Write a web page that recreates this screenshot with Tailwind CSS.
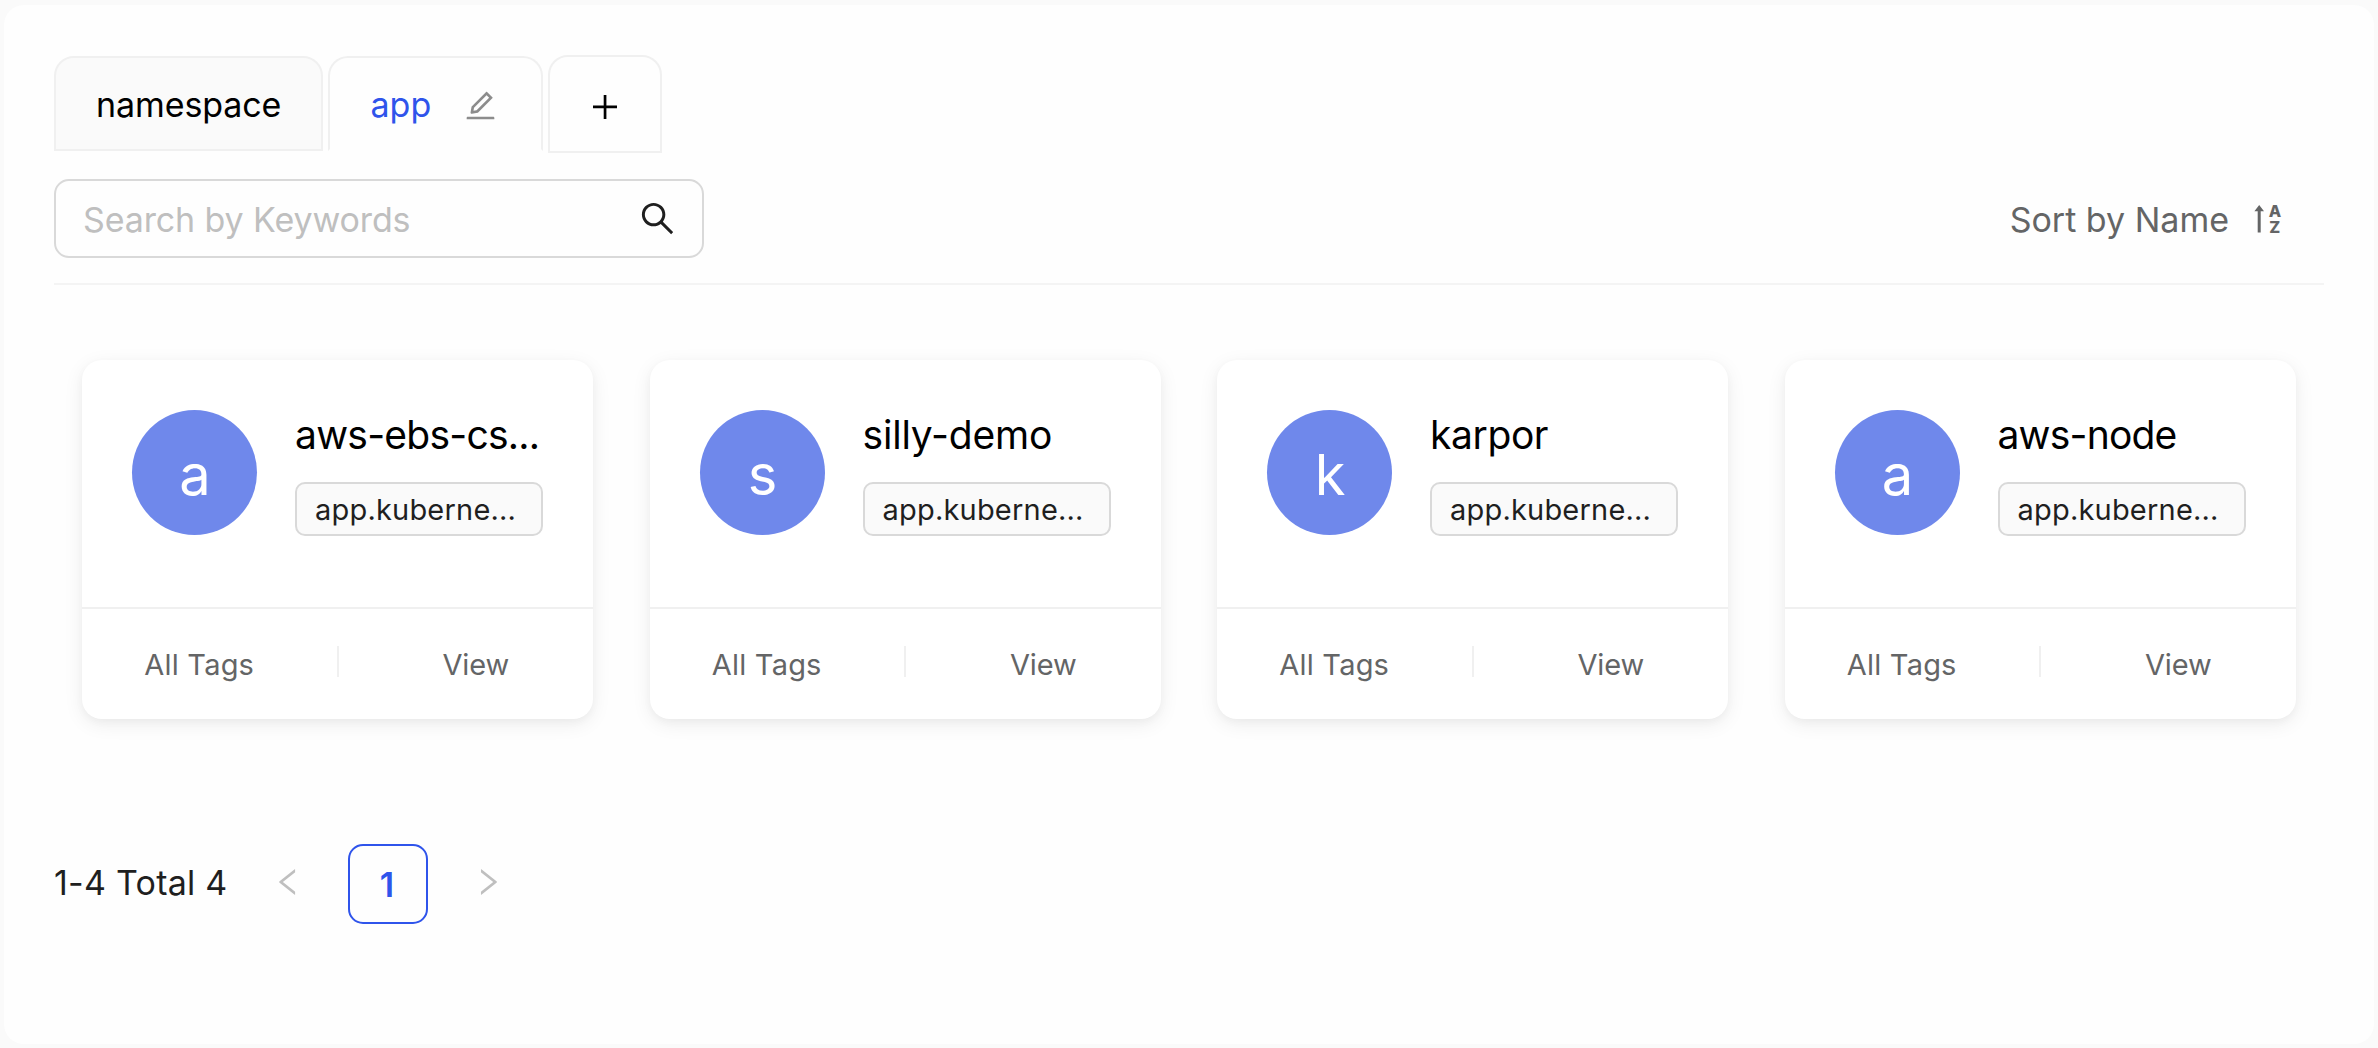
<!DOCTYPE html>
<html lang="en">
<head>
<meta charset="utf-8">
<title>Resource insight</title>
<script src="https://cdn.jsdelivr.net/npm/@tailwindcss/browser@4"></script>
</head>
<body class="h-[1048px] overflow-hidden bg-[#fafafa] px-1 pt-[5px] pb-1 font-[Inter,sans-serif] text-[34px] whitespace-nowrap text-[#1f1f1f]">
<main class="h-full rounded-[20px] bg-[#fefefe] px-[50px] pt-[50px]">

  <!-- Tabs -->
  <nav class="flex h-[98px] items-start gap-[5px] text-black">
    <div class="mt-px flex h-[95px] w-[269px] items-center rounded-t-[20px] border-2 border-[#f0f0f0] bg-[#fafafa] pt-0.5 pl-10 tracking-[-0.1px]">namespace</div>
    <div class="mt-px flex h-[95px] w-[215px] items-center rounded-t-[20px] border-2 border-b-transparent border-[#f0f0f0] pt-0.5 pl-[40.5px] text-[#2f54eb]">
      <span>app</span>
      <svg class="mt-0.5 ml-[34px] size-[31px] text-[#8c8c8c]" viewBox="64 64 896 896" fill="currentColor"><path d="M257.7 752c2 0 4-.2 6-.5L431.9 722c2-.4 3.9-1.3 5.3-2.8l423.9-423.9a9.96 9.96 0 000-14.1L694.9 114.9c-1.9-1.9-4.4-2.9-7.1-2.9s-5.2 1-7.1 2.9L256.8 538.8c-1.5 1.5-2.4 3.3-2.8 5.3l-29.5 168.2a33.5 33.5 0 009.4 29.8c6.6 6.4 14.9 9.9 23.8 9.9zm67.4-174.4L687.8 215l73.3 73.3-362.7 362.6-88.9 15.7 15.6-89zM880 836H144c-17.7 0-32 14.3-32 32v36c0 4.4 3.6 8 8 8h784c4.4 0 8-3.6 8-8v-36c0-17.7-14.3-32-32-32z"/></svg>
    </div>
    <div class="flex h-[98px] w-[114px] items-center justify-center rounded-t-[20px] border-2 border-[#f0f0f0] pt-1.5">
      <svg class="size-[30px]" viewBox="0 0 30 30" fill="currentColor"><path d="M13.7 3h2.7v24h-2.7zM3 13.6h24v2.6H3z"/></svg>
    </div>
  </nav>

  <!-- Search and sort -->
  <div class="mt-[26px] flex h-[106px] items-start justify-between border-b-2 border-[#f4f4f4]">
    <div class="flex h-[79px] w-[650px] items-center justify-between rounded-[15px] border-2 border-[#d9d9d9] pt-0.5 pr-[27px] pl-[27px]">
      <span class="tracking-[-0.12px] text-[#bfbfbf]">Search by Keywords</span>
      <svg class="mb-0.5 size-[35px]" viewBox="64 64 896 896" fill="currentColor"><path d="M909.6 854.5L649.9 594.8C690.2 542.7 712 479 712 412c0-80.2-31.3-155.4-87.9-212.1-56.6-56.7-132-87.9-212.1-87.9s-155.5 31.3-212.1 87.9C143.2 256.5 112 331.8 112 412c0 80.1 31.3 155.5 87.9 212.1C256.5 680.8 331.8 712 412 712c67 0 130.6-21.8 182.7-62l259.7 259.6a8.2 8.2 0 0011.6 0l43.6-43.5a8.2 8.2 0 000-11.6zM570.4 570.4C528 612.7 471.8 636 412 636s-116-23.3-158.4-65.6C211.3 528 188 471.8 188 412s23.3-116.1 65.6-158.4C296 211.3 352.2 188 412 188s116.1 23.2 158.4 65.6S636 352.2 636 412s-23.3 116.1-65.6 158.4z"/></svg>
    </div>
    <div class="flex h-[79px] items-center gap-[23px] pt-0.5 pr-[38px] text-[#646566]">
      <span>Sort by Name</span>
      <svg class="h-[38px] w-[34px]" viewBox="0 -4 34 38" fill="currentColor"><path d="M7.2 0l4.8 6.2H8.7V27.5h-3V6.2H2.4z"/><text x="16.8" y="11.6" font-size="16.2" font-weight="800" font-family="Inter" textLength="12">A</text><text x="17.2" y="28.2" font-size="16.2" font-weight="800" font-family="Inter">Z</text></svg>
    </div>
  </div>

  <!-- Cards -->
  <section id="cards" class="grid grid-cols-4 pt-[75px]"></section>
  <template id="card">
    <div class="pr-[28.5px] pl-7">
      <article class="rounded-[20px] bg-white shadow-[0_5px_20px_0_rgba(0,0,0,0.07),0_3px_8px_0_rgba(0,0,0,0.03)]">
        <div class="flex h-[247px] items-start gap-[38px] px-[50px] pt-[50px]">
          <div data-initial class="flex size-[125px] shrink-0 items-center justify-center rounded-full bg-[#6f88eb] pt-1 pl-px text-[56px] text-white"></div>
          <div class="min-w-0 flex-1">
            <h3 data-name class="text-[39px] leading-[49px] text-black"></h3>
            <div class="mt-[23px] flex h-[54px] items-center rounded-[10px] border-2 border-[#d9d9d9] bg-[#fafafa] pt-0.5 pl-[18px] text-[29px] tracking-[0.2px]">app.kuberne...</div>
          </div>
        </div>
        <div class="flex h-28 items-start border-t-2 border-[#f0f0f0] text-[29px] leading-[112px] text-[#646566]">
          <span class="flex-1 pr-[20px] text-center tracking-[0.2px]">All Tags</span>
          <span class="mt-[37px] h-[31px] w-0.5 bg-[#f0f0f0]"></span>
          <span class="flex-1 pl-[20px] text-center tracking-[-0.1px]">View</span>
        </div>
      </article>
    </div>
  </template>

  <!-- Pagination -->
  <div class="mt-[125px] flex h-20 items-center">
    <span class="w-[194px] pb-[3px] tracking-[0.25px]">1-4 Total 4</span>
    <div class="flex gap-5 text-[#bfbfbf]">
      <div class="flex size-20 items-center justify-center pb-1"><svg class="size-[30px]" viewBox="64 64 896 896" fill="currentColor"><path d="M724 218.3V141c0-6.7-7.7-10.4-12.9-6.3L260.3 486.8a31.86 31.86 0 000 50.3l450.8 352.1c5.3 4.1 12.9.4 12.9-6.3v-77.3c0-4.9-2.3-9.6-6.1-12.6l-360-281 360-281.1c3.8-3 6.1-7.7 6.1-12.6z"/></svg></div>
      <div class="flex size-20 items-center justify-center rounded-[15px] border-2 border-[#2f54eb] pt-px pr-0.5 font-semibold text-[#2f54eb]">1</div>
      <div class="flex size-20 items-center justify-center pb-1"><svg class="size-[30px]" viewBox="64 64 896 896" fill="currentColor"><path d="M765.7 486.8L314.9 134.7A7.97 7.97 0 00302 141v77.3c0 4.9 2.3 9.6 6.1 12.6l360 281.1-360 281.1c-3.9 3-6.1 7.7-6.1 12.6V883c0 6.7 7.7 10.4 12.9 6.3l450.8-352.1a31.96 31.96 0 000-50.4z"/></svg></div>
    </div>
  </div>
</main>
<script>
  const apps = [
    ['aws-ebs-cs...', -0.75],
    ['silly-demo', -0.2],
    ['karpor', -0.4],
    ['aws-node', -0.8],
  ];
  const tpl = document.getElementById('card');
  for (const [name, spacing] of apps) {
    const node = tpl.content.cloneNode(true);
    node.querySelector('[data-initial]').textContent = name[0];
    const title = node.querySelector('[data-name]');
    title.textContent = name;
    title.style.letterSpacing = spacing + 'px';
    document.getElementById('cards').append(node);
  }
</script>
</body>
</html>
